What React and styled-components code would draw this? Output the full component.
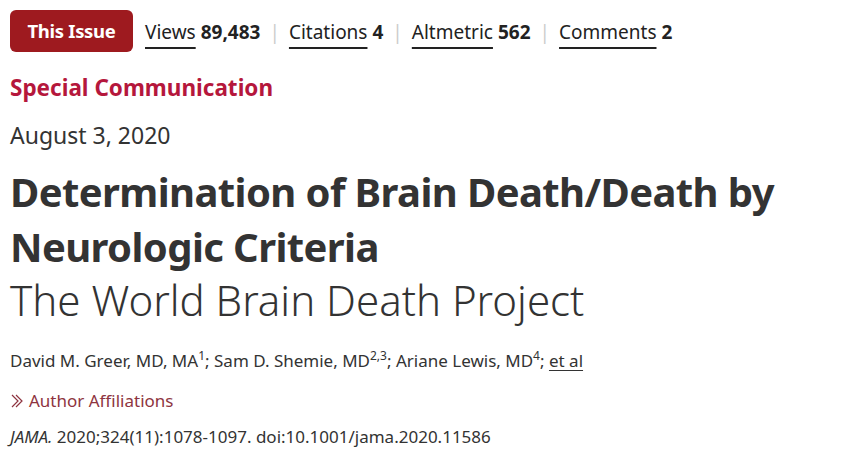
import React from "react";
import styled, { createGlobalStyle } from "styled-components";

const Global = createGlobalStyle`
  html, body { margin: 0; padding: 0; background: #fff; }
  body { font-family: "Noto Sans", "Open Sans", sans-serif; color: #333; }
`;

const Page = styled.div`
  padding: 10px 10px 0 10px;
  display: flex;
  flex-direction: column;
`;

const Toolbar = styled.div`
  display: flex;
  align-items: center;
  height: 42px;
`;

const Badge = styled.div`
  background: #9e1a1f;
  color: #fff;
  font-weight: 700;
  font-size: 18.5px;
  letter-spacing: -0.3px;
  height: 42px;
  width: 123px;
  border-radius: 6px;
  display: flex;
  align-items: center;
  justify-content: center;
  box-sizing: border-box;
  padding-bottom: 1px;
`;

const Metrics = styled.div`
  display: flex;
  align-items: center;
  margin-left: 12px;
  font-size: 19px;
  color: #222;
  padding-top: 2px;
`;

const Metric = styled.span`
  display: inline-flex;
  align-items: baseline;
  gap: 5px;
`;

const MetricLabel = styled.span`
  text-decoration: underline;
  text-decoration-thickness: 1.5px;
  text-underline-offset: 8px;
  font-weight: 400;
`;

const MetricValue = styled.b`
  font-weight: 700;
`;

const Sep = styled.span`
  color: #ccc;
  margin: 0 9px;
`;

const Kicker = styled.div`
  margin-top: 21px;
  color: #b5173c;
  font-weight: 700;
  font-size: 22.5px;
  line-height: 30px;
`;

const DateLine = styled.div`
  margin-top: 17px;
  font-size: 23px;
  line-height: 30px;
  color: #333;
`;

const Title = styled.h1`
  margin: 14px 0 0 0;
  font-size: 40px;
  letter-spacing: -0.6px;
  line-height: 55px;
  font-weight: 700;
  color: #333;
`;

const Subtitle = styled.div`
  font-size: 42px;
  line-height: 52px;
  font-weight: 300;
  color: #333;
`;

const Authors = styled.div`
  margin-top: 23px;
  font-size: 17px;
  line-height: 24px;
  color: #333;
  sup { font-size: 12px; line-height: 0; }
  a { color: #333; text-decoration: underline; text-underline-offset: 3px; }
`;

const Affil = styled.div`
  margin-top: 16px;
  font-size: 17px;
  line-height: 24px;
  color: #8e3440;
  display: flex;
  align-items: center;
  gap: 5px;
`;

const Citation = styled.div`
  margin-top: 12px;
  font-size: 17px;
  line-height: 24px;
  color: #333;
  i { font-style: italic; }
`;

export default function App() {
  return (
    <>
      <Global />
      <Page>
        <Toolbar>
          <Badge>This Issue</Badge>
          <Metrics>
            <Metric><MetricLabel>Views</MetricLabel><MetricValue>89,483</MetricValue></Metric>
            <Sep>|</Sep>
            <Metric><MetricLabel>Citations</MetricLabel><MetricValue>4</MetricValue></Metric>
            <Sep>|</Sep>
            <Metric><MetricLabel>Altmetric</MetricLabel><MetricValue>562</MetricValue></Metric>
            <Sep>|</Sep>
            <Metric><MetricLabel>Comments</MetricLabel><MetricValue>2</MetricValue></Metric>
          </Metrics>
        </Toolbar>
        <Kicker>Special Communication</Kicker>
        <DateLine>August 3, 2020</DateLine>
        <Title>Determination of Brain Death/Death by Neurologic Criteria</Title>
        <Subtitle>The World Brain Death Project</Subtitle>
        <Authors>
          David M. Greer, MD, MA<sup>1</sup>; Sam D. Shemie, MD<sup>2,3</sup>; Ariane Lewis, MD<sup>4</sup>; <a>et al</a>
        </Authors>
        <Affil>
          <svg width="14" height="16" viewBox="0 0 14 16" fill="none" stroke="#8e3440" strokeWidth="1.2">
            <path d="M2 2 L8 8 L2 14" />
            <path d="M6 2 L12 8 L6 14" />
          </svg>
          Author Affiliations
        </Affil>
        <Citation><i>JAMA.</i> 2020;324(11):1078-1097. doi:10.1001/jama.2020.11586</Citation>
      </Page>
    </>
  );
}
